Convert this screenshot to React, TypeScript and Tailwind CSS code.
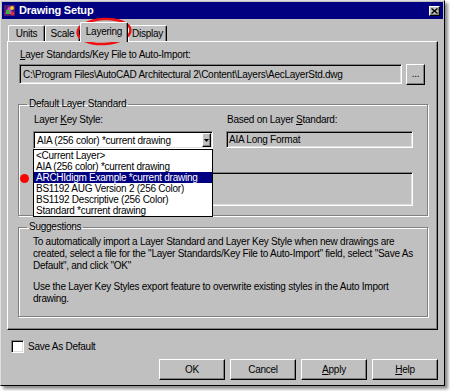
import React from 'react';

const font = { fontFamily: '"Liberation Sans", Arial, sans-serif' };

// classic 3D edges
const raised =
  'border border-t-white border-l-white border-r-black border-b-black shadow-[inset_-1px_-1px_0_#808080]';
const sunken =
  'border border-t-[#808080] border-l-[#808080] border-r-white border-b-white shadow-[inset_1px_1px_0_#000,inset_-1px_-1px_0_#dfdfdf]';
const etched = 'border border-[#808080] shadow-[1px_1px_0_#fff,inset_1px_1px_0_#fff]';

const TitleIcon = () => (
  <svg width="13" height="13" viewBox="0 0 13 13">
    <rect x="1" y="1" width="11" height="11" fill="#5a1a6e" />
    <path d="M2 10 L6 2 L10 10 Z" fill="#d04ad8" />
    <rect x="3" y="6" width="4" height="4" fill="#3cb043" />
    <circle cx="9" cy="4" r="2" fill="#f2d21b" />
    <rect x="8" y="8" width="3" height="3" fill="#e03030" />
  </svg>
);

const Tab = ({ label, w, active }: { label: string; w: string; active?: boolean }) => (
  <div
    className={`${w} flex items-center justify-center border-t border-l border-r border-t-white border-l-white border-r-black rounded-t-[2px] bg-[#c0c0c0] shadow-[inset_-1px_0_0_#808080] ${
      active ? 'h-[20px] -mb-px relative z-10 pb-[2px]' : 'h-[16px]'
    }`}
  >
    {label}
  </div>
);

const Button = ({ children }: { children: React.ReactNode }) => (
  <button className={`w-[66px] h-[21px] bg-[#c0c0c0] ${raised} text-black text-[10px] leading-none`}>
    {children}
  </button>
);

const listItems = [
  '<Current Layer>',
  'AIA (256 color) *current drawing',
  'ARCHIdigm Example *current drawing',
  'BS1192 AUG Version 2 (256 Color)',
  'BS1192 Descriptive (256 Color)',
  'Standard *current drawing',
];

export default function App() {
  return (
    <div className="w-[450px] h-[391px] bg-white relative" style={font}>
      <div className="w-[445px] h-[386px] bg-[#c0c0c0] border border-t-[#dfdfdf] border-l-[#dfdfdf] border-r-black border-b-black shadow-[3px_3px_3px_rgba(0,0,0,0.45)] flex flex-col text-[10px] tracking-[-0.25px] text-black">
        {/* title bar */}
        <div className="mx-px mt-px h-[17px] bg-[#000080] flex items-center px-[1px]">
          <TitleIcon />
          <span className="ml-[3px] text-white font-bold text-[11px] tracking-[-0.2px]">Drawing Setup</span>
          <div className={`ml-auto mr-[2px] w-[11px] h-[10px] bg-[#c0c0c0] ${raised} flex items-center justify-center`}>
            <svg width="7" height="6" viewBox="0 0 7 6">
              <path d="M0.5 0.5 L6.5 5.5 M6.5 0.5 L0.5 5.5" stroke="black" strokeWidth="1.4" />
            </svg>
          </div>
        </div>

        {/* tabs */}
        <div className="mt-[3px] ml-[7px] h-[19px] flex items-end">
          <Tab label="Units" w="w-[37px]" />
          <Tab label="Scale" w="w-[35px]" />
          <Tab label="Layering" w="w-[48px]" active />
          <Tab label="Display" w="w-[39px]" />
        </div>

        {/* tab panel */}
        <div className={`ml-[6px] w-[431px] h-[289px] ${raised} flex flex-col`}>
          <div className="mt-[7px] ml-[12px] leading-[12px]">
            <span className="underline">L</span>ayer Standards/Key File to Auto-Import:
          </div>
          <div className="mt-[3px] ml-[11px] flex items-start gap-[4px]">
            <div className={`w-[383px] h-[20px] ${sunken} flex items-center pl-[3px] whitespace-nowrap`}>
              C:\Program Files\AutoCAD Architectural 2\Content\Layers\AecLayerStd.dwg
            </div>
            <div className={`w-[19px] h-[21px] ${raised} flex items-center justify-center pb-[2px]`}>...</div>
          </div>

          <fieldset className={`mt-[13px] ml-[10px] w-[407px] ${etched} px-[14px] pb-[9px]`}>
            <legend className="-ml-[6px] px-[2px] leading-[12px]">Default Layer Standard</legend>
            <div className="grid grid-cols-[180px_187px] gap-x-[13px] mt-[4px]">
              <div className="leading-[12px] pl-[1px]">
                Layer <span className="underline">K</span>ey Style:
              </div>
              <div className="leading-[12px] pl-[1px]">
                Based on Layer <span className="underline">S</span>tandard:
              </div>
              <div className="relative mt-[5px]">
                <div className={`h-[18px] bg-white ${sunken} flex items-center pl-[3px] pr-[1px] whitespace-nowrap`}>
                  <span className="flex-1">AIA (256 color) *current drawing</span>
                  <div className={`w-[9px] h-[14px] bg-[#c0c0c0] ${raised} flex items-center justify-center`}>
                    <svg width="5" height="3" viewBox="0 0 5 3">
                      <path d="M0 0 H5 L2.5 3 Z" fill="black" />
                    </svg>
                  </div>
                </div>
                {/* open dropdown list */}
                <div className="absolute left-0 top-full w-[180px] h-[68px] bg-white border border-black z-20 flex flex-col">
                  {listItems.map((t, i) => (
                    <div
                      key={t}
                      className={`h-[11px] leading-[11px] pl-[2px] whitespace-nowrap ${
                        i === 2 ? 'bg-[#000080] text-white' : ''
                      }`}
                    >
                      {t}
                    </div>
                  ))}
                </div>
              </div>
              <div className={`mt-[5px] h-[17px] ${sunken} flex items-center pl-[2px]`}>AIA Long Format</div>
            </div>
            <div className={`mt-[23px] w-[380px] h-[34px] ${sunken}`} />
          </fieldset>

          <fieldset className={`mt-[5px] ml-[10px] w-[407px] h-[96px] ${etched} px-[14px]`}>
            <legend className="-ml-[6px] px-[2px] leading-[12px]">Suggestions</legend>
            <div className="mt-[3px] leading-[12px] whitespace-nowrap">
              To automatically import a Layer Standard and Layer Key Style when new drawings are
              <br />
              created, select a file for the "Layer Standards/Key File to Auto-Import" field, select "Save As
              <br />
              Default", and click "OK"
            </div>
            <div className="mt-[9px] leading-[12px] whitespace-nowrap">
              Use the Layer Key Styles export feature to overwrite existing styles in the Auto Import
              <br />
              drawing.
            </div>
          </fieldset>
        </div>

        {/* bottom */}
        <div className="px-[6px] flex flex-col">
          <div className="mt-[10px] ml-[4px] flex items-center gap-[4px] h-[13px]">
            <div className={`w-[13px] h-[13px] bg-white ${sunken}`} />
            <span>Save As Default</span>
          </div>
          <div className="mt-[6px] flex justify-end gap-[5px]">
            <Button>OK</Button>
            <Button>Cancel</Button>
            <Button>
              <span className="underline">A</span>pply
            </Button>
            <Button>
              <span className="underline">H</span>elp
            </Button>
          </div>
        </div>
      </div>

      {/* red annotations */}
      <svg className="absolute left-[75px] top-[17px]" width="58" height="29" viewBox="0 0 58 29">
        <ellipse cx="29" cy="14.5" rx="26.5" ry="12.5" fill="none" stroke="#ee1111" strokeWidth="2.4" transform="rotate(-3 29 14.5)" />
      </svg>
      <div className="absolute left-[20px] top-[174px] w-[9px] h-[9px] rounded-full bg-[#ff0000]" />
    </div>
  );
}
